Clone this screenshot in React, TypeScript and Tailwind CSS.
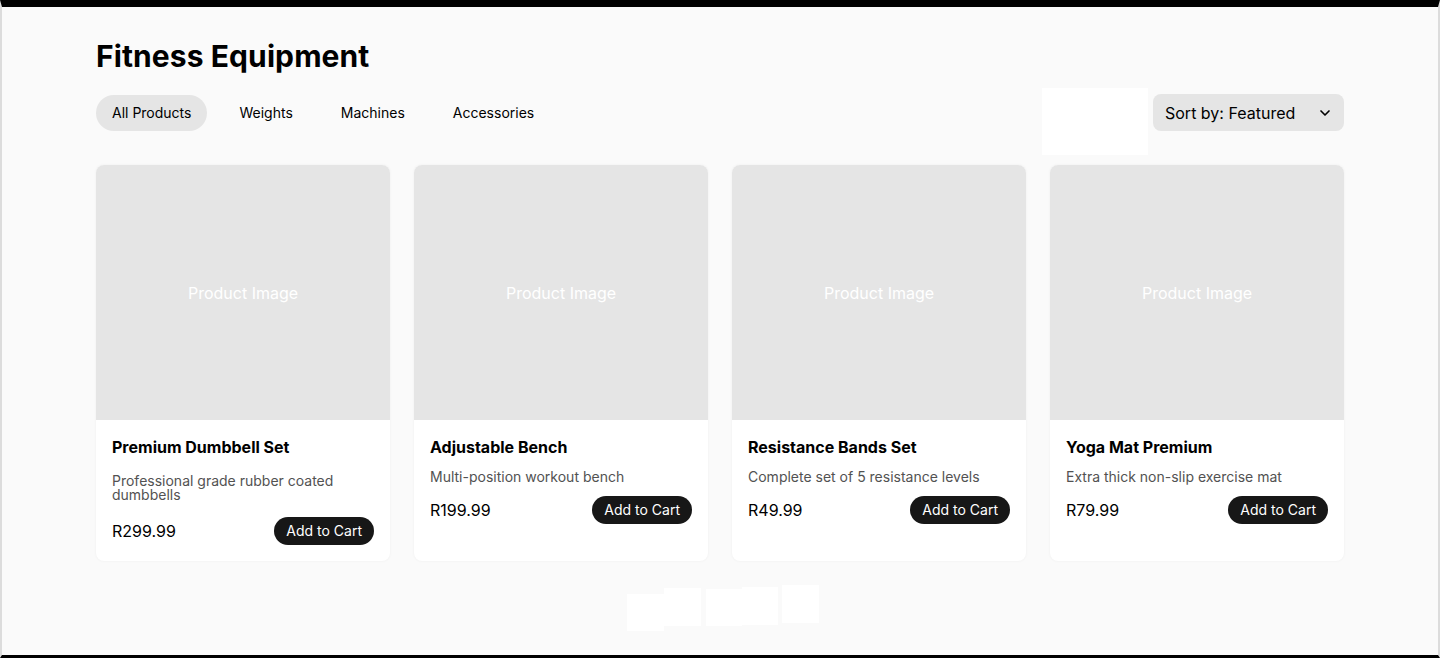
import { ChevronDown } from 'lucide-react'

// 商品データ
const PRODUCTS = [
  { name: 'Premium Dumbbell Set', desc: 'Professional grade rubber coated dumbbells', price: 'R299.99' },
  { name: 'Adjustable Bench', desc: 'Multi-position workout bench', price: 'R199.99' },
  { name: 'Resistance Bands Set', desc: 'Complete set of 5 resistance levels', price: 'R49.99' },
  { name: 'Yoga Mat Premium', desc: 'Extra thick non-slip exercise mat', price: 'R79.99' },
]

const TABS = ['All Products', 'Weights', 'Machines', 'Accessories']

export default function App() {
  return (
    <div
      className="h-[658px] overflow-hidden bg-[#fafafa] border-t-[7px] border-t-black border-b-[3px] border-b-black border-l-2 border-r-2 border-l-[#dcdcdc] border-r-[#dcdcdc] text-black"
      style={{ fontFamily: 'Inter, "Liberation Sans", sans-serif' }}
    >
      <main className="mx-[94px] pt-[31px]">
        <h1 className="text-[30px] leading-9 font-bold tracking-[0.1px] mb-[20px]">Fitness Equipment</h1>

        {/* フィルタ行 */}
        <div className="flex items-center justify-between mb-[34px]">
          <div className="flex items-center gap-4">
            {TABS.map((t, i) => (
              <button
                key={t}
                className={`h-9 px-4 rounded-full text-sm ${i === 0 ? 'bg-[#e5e5e5]' : ''}`}
              >
                {t}
              </button>
            ))}
          </div>
          <div className="flex items-start gap-[5px]">
            <div className="w-[106px] h-[67px] bg-white -mt-[6px] -mb-[24px]" />
            <button className="h-[37px] w-[191px] pl-3 pr-[11px] rounded-lg bg-[#e5e5e5] flex items-center justify-between text-base">
              <span>Sort by: Featured</span>
              <ChevronDown className="w-4 h-4" strokeWidth={2.5} />
            </button>
          </div>
        </div>

        {/* 商品グリッド */}
        <div className="grid grid-cols-4 gap-6">
          {PRODUCTS.map((p, i) => (
            <div
              key={p.name}
              className="bg-white rounded-lg overflow-hidden flex flex-col shadow-[0_0_3px_rgba(0,0,0,0.05)]"
            >
              <div className="h-[255px] bg-[#e5e5e5] flex items-center justify-center text-white text-base">
                Product Image
              </div>
              <div className="px-4 pt-[15px] pb-4 flex flex-col">
                <h2 className="text-base leading-6 font-bold">{p.name}</h2>
                <p
                  className={`text-sm leading-[14px] text-[#525252] ${i === 0 ? 'mt-[15px] mb-[15px]' : 'mt-[11px] mb-[12px]'}`}
                >
                  {p.desc}
                </p>
                <div className="flex items-center justify-between">
                  <span className="text-base">{p.price}</span>
                  <button className="h-7 px-3 rounded-full bg-[#171717] text-white text-sm">Add to Cart</button>
                </div>
              </div>
            </div>
          ))}
        </div>

        {/* ページネーション（空白ボタン） */}
        <div className="flex justify-center items-start mt-6 ml-[5px]">
          <div className="w-[37px] h-[37px] bg-white mt-[9px]" />
          <div className="w-[37px] h-[38px] bg-white mt-[3px]" />
          <div className="w-[36px] h-[37px] bg-white mt-[4px] ml-[5px]" />
          <div className="w-[36px] h-[38px] bg-white mt-[2px]" />
          <div className="w-[37px] h-[38px] bg-white ml-[4px]" />
        </div>
      </main>
    </div>
  )
}
